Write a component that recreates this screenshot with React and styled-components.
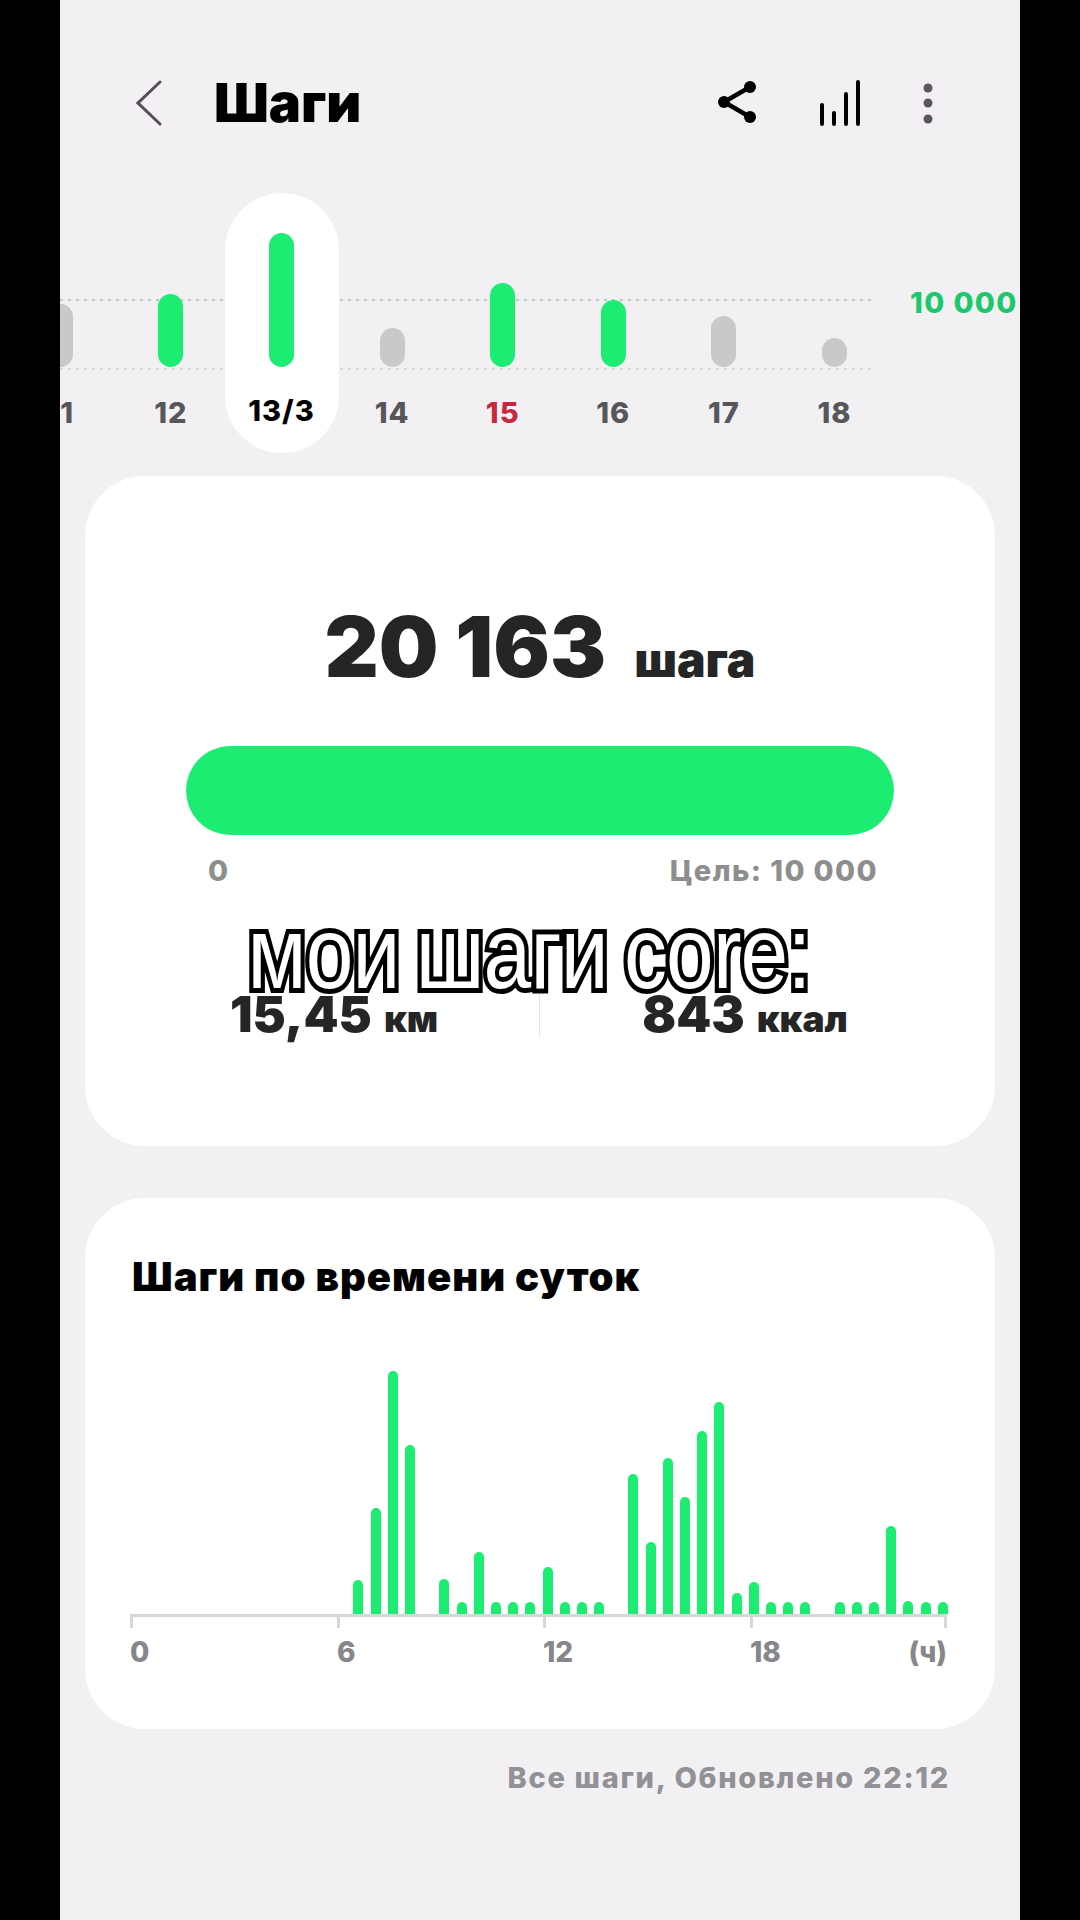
import React from 'react';
import styled, { createGlobalStyle } from 'styled-components';

const GREEN = '#1dec72';

const GlobalStyle = createGlobalStyle`
  html, body {
    margin: 0;
    padding: 0;
    background: #000;
  }
  * {
    box-sizing: border-box;
  }
`;

const Phone = styled.div`
  width: 960px;
  height: 1920px;
  margin: 0 60px;
  overflow: hidden;
  background: #f2f0f3;
  font-family: Inter, "Liberation Sans", sans-serif;
  font-weight: 800;
`;

const Header = styled.header`
  height: 46px;
  margin-top: 80px;
  padding: 0 87px 0 76px;
  display: flex;
  align-items: center;
`;

const Title = styled.h1`
  margin: 0 0 0 52px;
  flex: 1;
  color: #000;
  font-size: 54px;
  font-weight: 900;
  line-height: 46px;
`;

const HeaderIcons = styled.div`
  display: flex;
  align-items: center;
  gap: 62px;
`;

const Strip = styled.div`
  position: relative;
  height: 260px;
  margin: 67px 0 0 -55px;
  display: flex;
`;

const GuideLine = styled.div`
  position: absolute;
  left: 55px;
  width: 812px;
  height: 2px;
  top: ${(p) => p.$top}px;
  background: repeating-linear-gradient(
    to right,
    ${(p) => p.$color} 0 3px,
    transparent 3px 8px
  );
`;

const GoalLabel = styled.div`
  position: absolute;
  left: 905px;
  top: 93px;
  color: #1cc86c;
  font-size: 29px;
  letter-spacing: 1.4px;
  line-height: 34px;
  white-space: nowrap;
`;

const Day = styled.div`
  position: relative;
  flex: none;
  width: ${(p) => (p.$selected ? 114 : 110.6)}px;
  margin: 0 ${(p) => (p.$selected ? -1.7 : 0)}px;
  display: flex;
  flex-direction: column;
  align-items: center;
  background: ${(p) => (p.$selected ? '#fff' : 'transparent')};
  border-radius: 57px;
`;

const BarSlot = styled.div`
  position: relative;
  height: 174px;
  display: flex;
  align-items: flex-end;
`;

const DayBar = styled.div`
  width: 25px;
  height: ${(p) => p.$height}px;
  border-radius: 13px;
  background: ${(p) => (p.$active ? GREEN : '#c9c8ca')};
`;

const DayLabel = styled.div`
  margin-top: ${(p) => (p.$selected ? 27 : 29)}px;
  color: ${(p) => (p.$selected ? '#000' : p.$red ? '#c8283e' : '#57565a')};
  font-size: 29px;
  letter-spacing: 1px;
  line-height: 34px;
`;

const Card = styled.section`
  position: relative;
  width: 910px;
  height: ${(p) => p.$height}px;
  margin: ${(p) => p.$top}px 0 0 25px;
  background: #fff;
  border-radius: 60px;
`;

const Total = styled.div`
  padding-top: 126px;
  display: flex;
  justify-content: center;
  align-items: baseline;
  gap: 28px;
  color: #252525;
  line-height: 90px;
`;

const TotalValue = styled.span`
  font-size: 84px;
  font-weight: 900;
`;

const TotalUnit = styled.span`
  font-size: 48px;
  font-weight: 900;
`;

const Progress = styled.div`
  width: 708px;
  height: 89px;
  margin: 41px 0 0 101px;
  background: ${GREEN};
  border-radius: 45px;
`;

const Scale = styled.div`
  width: 670px;
  margin: 19px 0 0 123px;
  display: flex;
  justify-content: space-between;
  color: #8e8e8e;
  font-size: 29px;
  letter-spacing: 1.4px;
  line-height: 34px;
`;

const Stats = styled.div`
  margin: 103px 0 0 44px;
  display: flex;
  height: 46px;
`;

const Stat = styled.div`
  width: 410px;
  display: flex;
  align-items: baseline;
  justify-content: center;
  gap: 12px;
  color: #252525;
  line-height: 46px;
`;

const StatValue = styled.span`
  font-size: 50px;
  font-weight: 900;
`;

const StatUnit = styled.span`
  font-size: 37px;
  font-weight: 900;
`;

const Divider = styled.div`
  width: 1px;
  background: #e6e6e6;
`;

// subtitle burnt over the card
const Caption = styled.div`
  position: absolute;
  left: -11px;
  right: 11px;
  top: 427px;
  text-align: center;
  color: #fff;
  font-family: "Liberation Sans", Arial, sans-serif;
  font-size: 102px;
  font-weight: 400;
  line-height: 100px;
  letter-spacing: -1px;
  word-spacing: -8px;
  -webkit-text-stroke: 10px #000;
  paint-order: stroke fill;
  white-space: nowrap;
  transform: scaleX(0.84);
`;

const CardTitle = styled.h2`
  margin: 0;
  padding: 56px 0 0 47px;
  color: #000;
  font-size: 40px;
  font-weight: 900;
  letter-spacing: 1px;
  line-height: 46px;
`;

const Bars = styled.div`
  height: 314px;
  margin: 0 0 0 45px;
  display: flex;
  align-items: flex-end;
  gap: 7.2px;
`;

const HourBar = styled.div`
  width: 10px;
  flex: none;
  height: ${(p) => p.$height}px;
  border-radius: 5px 5px 0 0;
  background: ${(p) => (p.$height ? GREEN : 'transparent')};
`;

const Axis = styled.div`
  width: 817px;
  margin-left: 45px;
  display: grid;
  grid-template-columns: 207px 206px 207px 197px;
  border-top: 3px solid #d6d6d6;
`;

const Tick = styled.div`
  height: 11px;
  border-left: 3px solid #d6d6d6;
  ${(p) => p.$last && 'border-right: 3px solid #d6d6d6;'}
`;

const AxisLabels = styled.div`
  width: 817px;
  margin: 8px 0 0 45px;
  display: grid;
  grid-template-columns: 207px 206px 207px 197px;
`;

const AxisLabel = styled.div`
  display: flex;
  justify-content: space-between;
  color: #87868a;
  font-size: 28px;
  line-height: 32px;
`;

const Footer = styled.div`
  margin-top: 32px;
  padding-right: 70px;
  text-align: right;
  color: #929195;
  font-size: 29px;
  letter-spacing: 1.7px;
  line-height: 34px;
`;

const days = [
  { label: '11', height: 63, active: false },
  { label: '12', height: 73, active: true },
  { label: '13/3', height: 134, active: true, selected: true },
  { label: '14', height: 39, active: false },
  { label: '15', height: 84, active: true, red: true },
  { label: '16', height: 67, active: true },
  { label: '17', height: 51, active: false },
  { label: '18', height: 29, active: false },
];

const hours = [
  0, 0, 0, 0, 0, 0, 0, 0, 0, 0, 0, 0, 0, 34, 106, 243, 169, 0, 35, 12, 62, 12, 12, 12,
  47, 12, 12, 12, 0, 140, 72, 156, 117, 183, 212, 21, 32, 12, 12, 12, 0, 12, 12, 12, 88, 13, 12, 12,
];

const BackIcon = () => (
  <svg width="26" height="46" viewBox="0 0 26 46" fill="none">
    <path d="M24 2 L2 23 L24 44" stroke="#5a4b59" strokeWidth="3" strokeLinecap="round" strokeLinejoin="miter" />
  </svg>
);

const ShareIcon = () => (
  <svg width="40" height="46" viewBox="0 0 40 46" fill="none">
    <path d="M33 7 L7 22 L33 37" stroke="#000" strokeWidth="4.5" />
    <circle cx="33" cy="7" r="6" fill="#000" />
    <circle cx="7" cy="22" r="6" fill="#000" />
    <circle cx="33" cy="37" r="6" fill="#000" />
  </svg>
);

const LevelsIcon = () => (
  <svg width="42" height="46" viewBox="0 0 42 46" fill="none" stroke="#000" strokeWidth="4" strokeLinecap="round">
    <path d="M3 25 V44" />
    <path d="M15 33 V44" />
    <path d="M27 14 V44" />
    <path d="M39 2 V44" />
  </svg>
);

const MoreIcon = () => (
  <svg width="10" height="46" viewBox="0 0 10 46" fill="#5b5560">
    <circle cx="5" cy="8" r="4.5" />
    <circle cx="5" cy="23" r="4.5" />
    <circle cx="5" cy="39" r="4.5" />
  </svg>
);

export default function App() {
  return (
    <>
      <GlobalStyle />
      <Phone>
        <Header>
          <BackIcon />
          <Title>Шаги</Title>
          <HeaderIcons>
            <ShareIcon />
            <LevelsIcon />
            <MoreIcon />
          </HeaderIcons>
        </Header>

        <Strip>
          <GuideLine $top={106} $color="#b2cdbd" />
          <GuideLine $top={175} $color="#d9d7da" />
          {days.map((d) => (
            <Day key={d.label} $selected={d.selected}>
              <BarSlot>
                <DayBar $height={d.height} $active={d.active} />
              </BarSlot>
              <DayLabel $selected={d.selected} $red={d.red}>{d.label}</DayLabel>
            </Day>
          ))}
          <GoalLabel>10 000</GoalLabel>
        </Strip>

        <Card $height={670} $top={23}>
          <Total>
            <TotalValue>20 163</TotalValue>
            <TotalUnit>шага</TotalUnit>
          </Total>
          <Progress />
          <Scale>
            <span>0</span>
            <span>Цель: 10 000</span>
          </Scale>
          <Stats>
            <Stat>
              <StatValue>15,45</StatValue>
              <StatUnit>км</StatUnit>
            </Stat>
            <Divider />
            <Stat>
              <StatValue>843</StatValue>
              <StatUnit>ккал</StatUnit>
            </Stat>
          </Stats>
          <Caption>мои шаги core:</Caption>
        </Card>

        <Card $height={531} $top={52}>
          <CardTitle>Шаги по времени суток</CardTitle>
          <Bars>
            {hours.map((h, i) => (
              <HourBar key={i} $height={h} />
            ))}
          </Bars>
          <Axis>
            <Tick />
            <Tick />
            <Tick />
            <Tick $last />
          </Axis>
          <AxisLabels>
            <AxisLabel>0</AxisLabel>
            <AxisLabel>6</AxisLabel>
            <AxisLabel>12</AxisLabel>
            <AxisLabel>
              18
              <span>(ч)</span>
            </AxisLabel>
          </AxisLabels>
        </Card>

        <Footer>Все шаги, Обновлено 22:12</Footer>
      </Phone>
    </>
  );
}
